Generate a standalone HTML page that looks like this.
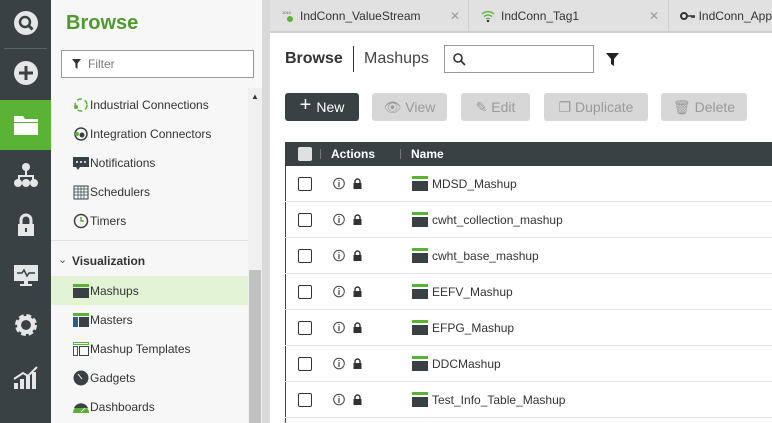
<!DOCTYPE html>
<html><head><style>
*{box-sizing:border-box;margin:0;padding:0}
body{width:772px;height:423px;overflow:hidden;font-family:"Liberation Sans",sans-serif;background:#fff;position:relative;font-size:12px;color:#333}
.abs{position:absolute}
#nav{left:0;top:0;width:51px;height:423px;background:#394144}
.nico{position:absolute;left:0;width:51px;display:flex;align-items:center;justify-content:center}
#side{left:51px;top:0;width:211px;height:423px;background:#f7f7f7}
#split{left:262px;top:0;width:8px;height:423px;background:#d9d9d9}
.si{position:absolute;left:22px;height:29px;display:flex;align-items:center;font-size:12px;color:#333}
.si svg{margin-right:1px}
#tabs{left:270px;top:0;width:502px;height:33px;background:#e1e1e1;border-bottom:2px solid #cfcfcf}
.tab{position:absolute;top:0;height:31px;display:flex;align-items:center;font-size:12px;color:#333;border-right:1px solid #cfcfcf}
.btn{position:absolute;top:93px;height:28px;border-radius:3px;background:#d7d7d7;color:#9a9a9a;font-size:14px;display:flex;align-items:center;justify-content:center}
.row{position:absolute;left:285px;width:487px;height:36px;border-bottom:1px solid #e6e6e6}
.cb{position:absolute;left:13px;top:11px;width:14px;height:14px;border:1.5px solid #333;border-radius:2px;background:#fff}
.row .nm{position:absolute;left:147px;top:11px;font-size:12px;color:#333}
</style></head><body>
<div id="nav" class="abs">
 <div class="nico" style="top:6px;height:34px"><svg width="26" height="26"><circle cx="13" cy="13" r="12" fill="#e6e6e6"/><circle cx="12" cy="12" r="5" fill="none" stroke="#394144" stroke-width="2.5"/><path d="M15.5 15.5l4 4" stroke="#394144" stroke-width="3"/></svg></div>
 <div style="position:absolute;left:4px;top:48px;width:43px;height:1px;background:#5a6265"></div>
 <div class="nico" style="top:56px;height:34px"><svg width="26" height="26"><circle cx="13" cy="13" r="12" fill="#e6e6e6"/><path d="M13 6v14M6 13h14" stroke="#394144" stroke-width="3"/></svg></div>
 <div class="nico" style="top:100px;height:50px;background:#5bb336"><svg width="26" height="22"><path d="M1 2h9l2 3h13v3H1z M1 9h24v12H1z" fill="#fff"/></svg></div>
 <div class="nico" style="top:158px;height:34px"><svg width="26" height="26" fill="#e6e6e6"><circle cx="13" cy="5" r="4"/><rect x="12" y="8" width="2" height="6"/><rect x="5" y="13" width="16" height="2"/><rect x="5" y="13" width="2" height="5"/><rect x="19" y="13" width="2" height="5"/><circle cx="5" cy="21" r="4"/><circle cx="13" cy="21" r="4"/><circle cx="21" cy="21" r="4"/></svg></div>
 <div class="nico" style="top:208px;height:34px"><svg width="20" height="24"><path d="M5 11V7a5 5 0 0110 0v4" fill="none" stroke="#e6e6e6" stroke-width="3"/><rect x="2" y="11" width="16" height="12" fill="#e6e6e6"/><rect x="9" y="15" width="2" height="4" fill="#394144"/></svg></div>
 <div class="nico" style="top:258px;height:34px"><svg width="26" height="24"><rect x="1" y="2" width="24" height="16" fill="#e6e6e6"/><path d="M4 10h5l2-3 3 6 2-3h6" stroke="#394144" stroke-width="1.5" fill="none"/><rect x="11" y="18" width="4" height="3" fill="#e6e6e6"/><rect x="7" y="21" width="12" height="2" fill="#e6e6e6"/></svg></div>
 <div class="nico" style="top:308px;height:34px"><svg width="26" height="26"><circle cx="13" cy="13" r="8" fill="none" stroke="#e6e6e6" stroke-width="6" stroke-dasharray="4 2.3"/><circle cx="13" cy="13" r="7" fill="none" stroke="#e6e6e6" stroke-width="4"/></svg></div>
 <div class="nico" style="top:360px;height:34px"><svg width="26" height="24" fill="#e6e6e6"><rect x="1" y="18" width="4" height="6"/><rect x="7" y="14" width="4" height="10"/><rect x="13" y="11" width="4" height="13"/><rect x="19" y="7" width="4" height="17"/><path d="M1 14L10 8l5 3 9-9" stroke="#e6e6e6" stroke-width="2" fill="none"/></svg></div>
</div>
<div id="side" class="abs">
 <div class="abs" style="left:15px;top:12px;font-size:20px;font-weight:bold;color:#4e9a2e">Browse</div>
 <div class="abs" style="left:10px;top:50px;width:193px;height:28px;border:1px solid #999;background:#fff"><svg style="position:absolute;left:10px;top:8px" width="9" height="10"><path d="M0 0h9L5.5 4.5V10L3.5 8.5V4.5z" fill="#333"/></svg><span style="position:absolute;left:26px;top:6px;color:#777;font-size:12px">Filter</span></div>
 <div class="si" style="top:90px"><svg width="16" height="16"><circle cx="8" cy="8" r="6" fill="none" stroke="#5bb336" stroke-width="1.5" stroke-dasharray="5 3"/><circle cx="3" cy="10" r="2" fill="#5bb336"/></svg>Industrial Connections</div>
 <div class="si" style="top:119px"><svg width="16" height="16"><circle cx="8" cy="8" r="6" fill="none" stroke="#394144" stroke-width="1.5"/><circle cx="9" cy="9" r="2.5" fill="#394144"/><circle cx="4" cy="8" r="2" fill="#5bb336"/></svg>Integration Connectors</div>
 <div class="si" style="top:148px"><svg width="16" height="16"><rect x="0" y="2" width="16" height="10" fill="#394144"/><path d="M3 12h4l-2 3z" fill="#394144"/><path d="M3 7h2M7 7h2M11 7h2" stroke="#fff" stroke-width="1.5"/></svg>Notifications</div>
 <div class="si" style="top:177px"><svg width="16" height="16"><rect x="1" y="2" width="14" height="13" fill="none" stroke="#394144"/><path d="M1 5h14M1 8h14M1 11h14M5 2v13M8 2v13M11 2v13" stroke="#394144" stroke-width=".7"/></svg>Schedulers</div>
 <div class="si" style="top:206px"><svg width="16" height="16"><circle cx="8" cy="8" r="6.5" fill="none" stroke="#394144" stroke-width="1.5"/><path d="M8 4v4h3" stroke="#5bb336" stroke-width="1.5" fill="none"/></svg>Timers</div>
 <div class="abs" style="left:0;top:240px;width:197px;height:1px;background:#e0e0e0"></div>
 <div class="abs" style="left:7px;top:253px;font-size:11px;color:#555">⌄</div>
 <div class="abs" style="left:21px;top:254px;font-size:12px;font-weight:bold;color:#333">Visualization</div>
 <div class="abs" style="left:0;top:276px;width:197px;height:29px;background:#e2f3d6"></div>
 <div class="si" style="top:276px"><svg width="16" height="14"><rect y="0" width="16" height="3" fill="#5bb336"/><rect y="4" width="16" height="10" fill="#394144"/></svg>Mashups</div>
 <div class="si" style="top:305px"><svg width="16" height="14"><rect y="0" width="16" height="3" fill="#5bb336"/><rect y="4" width="5" height="10" fill="#2b5f8a"/><rect x="6" y="4" width="10" height="10" fill="#394144"/></svg>Masters</div>
 <div class="si" style="top:334px"><svg width="16" height="14"><rect x=".5" y=".5" width="15" height="2" fill="none" stroke="#5bb336"/><rect x=".5" y="4.5" width="4" height="9" fill="none" stroke="#2b5f8a"/><rect x="6.5" y="4.5" width="9" height="9" fill="none" stroke="#394144"/></svg>Mashup Templates</div>
 <div class="si" style="top:363px"><svg width="16" height="16"><circle cx="8" cy="8" r="7.5" fill="#394144"/><path d="M5 4l4 5" stroke="#fff"/></svg>Gadgets</div>
 <div class="si" style="top:392px"><svg width="16" height="16"><path d="M0 14a8 8 0 0116 0z" fill="#5bb336"/><path d="M1 9a7.5 7.5 0 0114 0z" fill="#394144"/><path d="M8 13l4-4" stroke="#fff"/></svg>Dashboards</div>
 <div class="abs" style="left:197px;top:88px;width:14px;height:335px;background:#f0f0f0"></div>
 <div class="abs" style="left:200px;top:92px;font-size:8px;color:#333">▲</div>
 <div class="abs" style="left:198px;top:270px;width:12px;height:153px;background:#c1c1c1"></div>
</div>
<div id="split" class="abs"></div>
<div id="tabs" class="abs">
 <div class="tab" style="left:0;width:199px"><svg style="margin-left:12px" width="12" height="12"><text x="0" y="4" font-size="4" fill="#555">1010</text><circle cx="8" cy="9" r="3" fill="#5bb336"/></svg><span style="margin-left:6px">IndConn_ValueStream</span><span style="position:absolute;left:180px;color:#999">✕</span></div>
 <div class="tab" style="left:199px;width:200px"><svg style="margin-left:12px" width="14" height="12"><path d="M1 4a9 9 0 0112 0M3 6.5a6 6 0 018 0M5 9a3 3 0 014 0" stroke="#5bb336" stroke-width="1.3" fill="none"/><circle cx="7" cy="11" r="1.2" fill="#333"/></svg><span style="margin-left:6px">IndConn_Tag1</span><span style="position:absolute;left:180px;color:#999">✕</span></div>
 <div class="tab" style="left:399px;width:103px;border:none"><svg style="margin-left:11px" width="16" height="10"><circle cx="4" cy="5" r="3" fill="none" stroke="#333" stroke-width="2"/><path d="M7 5h8M12 5v2M14 5v2" stroke="#333" stroke-width="1.5"/></svg><span style="margin-left:4px;white-space:nowrap">IndConn_App</span></div>
</div>
<div class="abs" style="left:285px;top:50px;font-size:16px;font-weight:bold;color:#333">Browse</div>
<div class="abs" style="left:353px;top:46px;width:1px;height:26px;background:#333"></div>
<div class="abs" style="left:364px;top:50px;font-size:16px;color:#444">Mashups</div>
<div class="abs" style="left:444px;top:45px;width:150px;height:28px;border:1px solid #999"><svg style="position:absolute;left:8px;top:7px" width="13" height="13"><circle cx="5" cy="5" r="4" fill="none" stroke="#333" stroke-width="1.6"/><path d="M8 8l4 4" stroke="#333" stroke-width="1.8"/></svg></div>
<svg class="abs" style="left:606px;top:53px" width="13" height="13"><path d="M0 0h13L8 6v7L5 11V6z" fill="#222"/></svg>
<div class="btn" style="left:285px;width:74px;background:#394144;color:#fff"><b style="font-size:20px;font-weight:normal;margin-right:5px;margin-top:-3px">+</b>New</div>
<div class="btn" style="left:372px;width:75px">👁&#xFE0E;&nbsp;View</div>
<div class="btn" style="left:461px;width:69px">✎&nbsp;Edit</div>
<div class="btn" style="left:544px;width:104px">❐&nbsp;Duplicate</div>
<div class="btn" style="left:661px;width:86px">🗑&#xFE0E;&nbsp;Delete</div>
<div class="abs" style="left:285px;top:142px;width:1px;height:281px;background:#394144"></div>
<div class="abs" style="left:285px;top:142px;width:487px;height:24px;background:#394144">
 <div style="position:absolute;left:13px;top:5px;width:14px;height:14px;background:#e0e0e0;border-radius:2px"></div>
 <div style="position:absolute;left:35px;top:7px;width:1px;height:10px;background:#777"></div>
 <div style="position:absolute;left:46px;top:5px;color:#fff;font-weight:bold;font-size:12px">Actions</div>
 <div style="position:absolute;left:115px;top:7px;width:1px;height:10px;background:#777"></div>
 <div style="position:absolute;left:126px;top:5px;color:#fff;font-weight:bold;font-size:12px">Name</div>
</div>
<div class="row" style="top:166px"><div class="cb"></div><svg class="abs" style="left:48px;top:11px" width="30" height="14"><circle cx="6" cy="6.5" r="5.3" fill="none" stroke="#444"/><path d="M6 5v5M6 3v1" stroke="#444" stroke-width="1.2"/><path d="M22 6V4.5a2.5 2.5 0 015 0V6" fill="none" stroke="#333" stroke-width="1.4"/><rect x="20.5" y="6" width="8" height="6" fill="#333"/></svg><svg class="abs" style="left:127px;top:10px" width="16" height="16"><rect width="16" height="3" fill="#5bb336"/><rect y="5" width="16" height="10" fill="#394144"/></svg><div class="nm">MDSD_Mashup</div></div>
<div class="row" style="top:202px"><div class="cb"></div><svg class="abs" style="left:48px;top:11px" width="30" height="14"><circle cx="6" cy="6.5" r="5.3" fill="none" stroke="#444"/><path d="M6 5v5M6 3v1" stroke="#444" stroke-width="1.2"/><path d="M22 6V4.5a2.5 2.5 0 015 0V6" fill="none" stroke="#333" stroke-width="1.4"/><rect x="20.5" y="6" width="8" height="6" fill="#333"/></svg><svg class="abs" style="left:127px;top:10px" width="16" height="16"><rect width="16" height="3" fill="#5bb336"/><rect y="5" width="16" height="10" fill="#394144"/></svg><div class="nm">cwht_collection_mashup</div></div>
<div class="row" style="top:238px"><div class="cb"></div><svg class="abs" style="left:48px;top:11px" width="30" height="14"><circle cx="6" cy="6.5" r="5.3" fill="none" stroke="#444"/><path d="M6 5v5M6 3v1" stroke="#444" stroke-width="1.2"/><path d="M22 6V4.5a2.5 2.5 0 015 0V6" fill="none" stroke="#333" stroke-width="1.4"/><rect x="20.5" y="6" width="8" height="6" fill="#333"/></svg><svg class="abs" style="left:127px;top:10px" width="16" height="16"><rect width="16" height="3" fill="#5bb336"/><rect y="5" width="16" height="10" fill="#394144"/></svg><div class="nm">cwht_base_mashup</div></div>
<div class="row" style="top:274px"><div class="cb"></div><svg class="abs" style="left:48px;top:11px" width="30" height="14"><circle cx="6" cy="6.5" r="5.3" fill="none" stroke="#444"/><path d="M6 5v5M6 3v1" stroke="#444" stroke-width="1.2"/><path d="M22 6V4.5a2.5 2.5 0 015 0V6" fill="none" stroke="#333" stroke-width="1.4"/><rect x="20.5" y="6" width="8" height="6" fill="#333"/></svg><svg class="abs" style="left:127px;top:10px" width="16" height="16"><rect width="16" height="3" fill="#5bb336"/><rect y="5" width="16" height="10" fill="#394144"/></svg><div class="nm">EEFV_Mashup</div></div>
<div class="row" style="top:310px"><div class="cb"></div><svg class="abs" style="left:48px;top:11px" width="30" height="14"><circle cx="6" cy="6.5" r="5.3" fill="none" stroke="#444"/><path d="M6 5v5M6 3v1" stroke="#444" stroke-width="1.2"/><path d="M22 6V4.5a2.5 2.5 0 015 0V6" fill="none" stroke="#333" stroke-width="1.4"/><rect x="20.5" y="6" width="8" height="6" fill="#333"/></svg><svg class="abs" style="left:127px;top:10px" width="16" height="16"><rect width="16" height="3" fill="#5bb336"/><rect y="5" width="16" height="10" fill="#394144"/></svg><div class="nm">EFPG_Mashup</div></div>
<div class="row" style="top:346px"><div class="cb"></div><svg class="abs" style="left:48px;top:11px" width="30" height="14"><circle cx="6" cy="6.5" r="5.3" fill="none" stroke="#444"/><path d="M6 5v5M6 3v1" stroke="#444" stroke-width="1.2"/><path d="M22 6V4.5a2.5 2.5 0 015 0V6" fill="none" stroke="#333" stroke-width="1.4"/><rect x="20.5" y="6" width="8" height="6" fill="#333"/></svg><svg class="abs" style="left:127px;top:10px" width="16" height="16"><rect width="16" height="3" fill="#5bb336"/><rect y="5" width="16" height="10" fill="#394144"/></svg><div class="nm">DDCMashup</div></div>
<div class="row" style="top:382px"><div class="cb"></div><svg class="abs" style="left:48px;top:11px" width="30" height="14"><circle cx="6" cy="6.5" r="5.3" fill="none" stroke="#444"/><path d="M6 5v5M6 3v1" stroke="#444" stroke-width="1.2"/><path d="M22 6V4.5a2.5 2.5 0 015 0V6" fill="none" stroke="#333" stroke-width="1.4"/><rect x="20.5" y="6" width="8" height="6" fill="#333"/></svg><svg class="abs" style="left:127px;top:10px" width="16" height="16"><rect width="16" height="3" fill="#5bb336"/><rect y="5" width="16" height="10" fill="#394144"/></svg><div class="nm">Test_Info_Table_Mashup</div></div>
</body></html>
